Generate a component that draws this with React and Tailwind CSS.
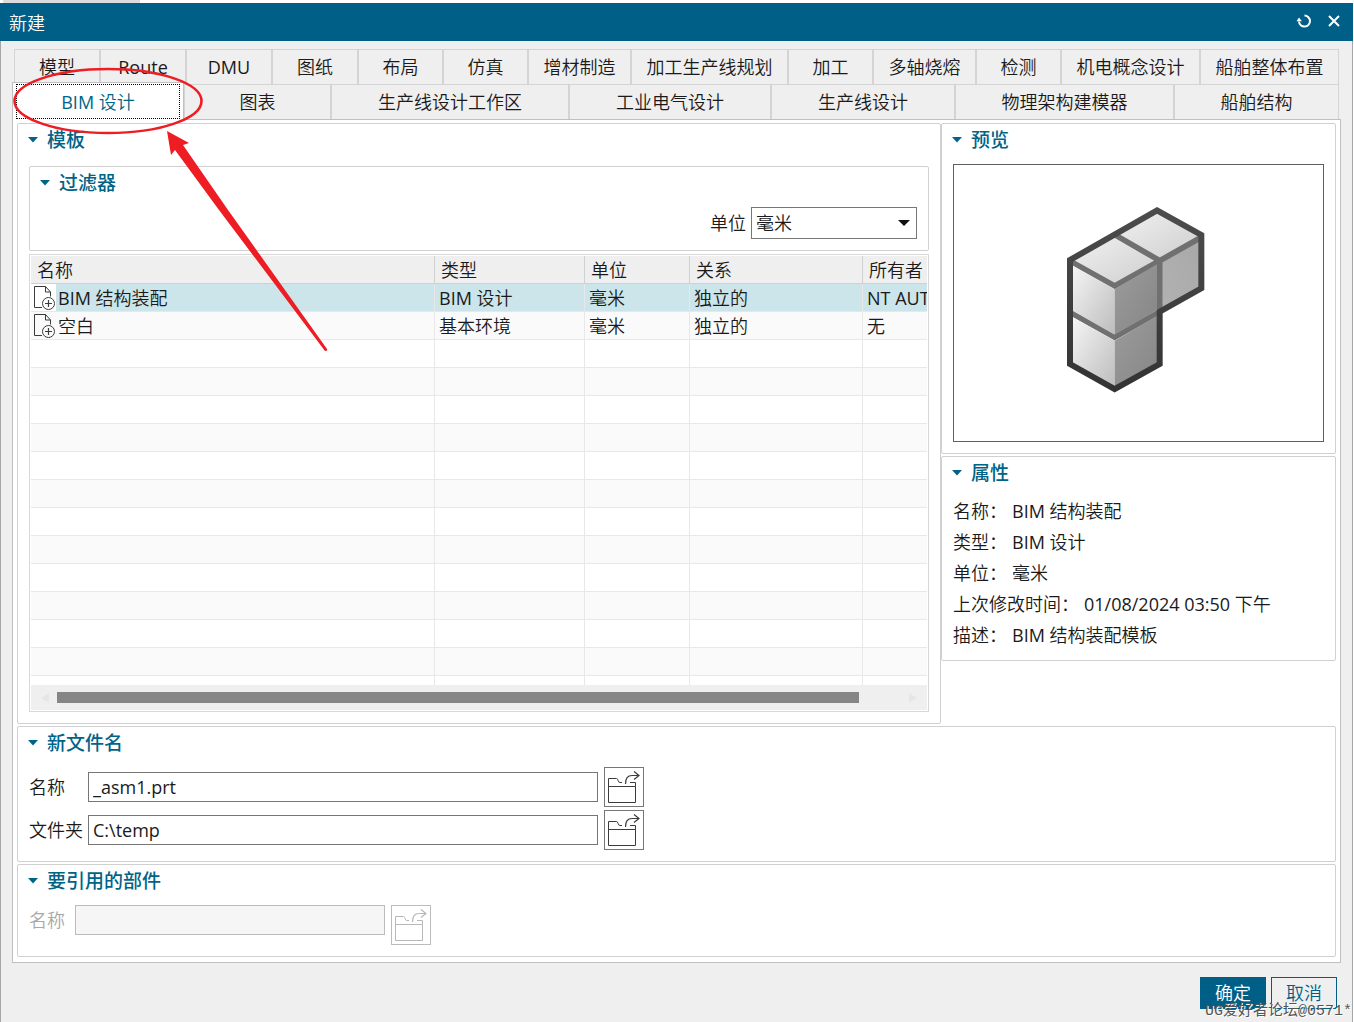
import React, { useState } from "react";

const tabsTop = [
  "模型",
  "Route",
  "DMU",
  "图纸",
  "布局",
  "仿真",
  "增材制造",
  "加工生产线规划",
  "加工",
  "多轴烧熔",
  "检测",
  "机电概念设计",
  "船舶整体布置",
];

const tabsBottom = [
  "BIM 设计",
  "图表",
  "生产线设计工作区",
  "工业电气设计",
  "生产线设计",
  "物理架构建模器",
  "船舶结构",
];

const templates = [
  { name: "BIM 结构装配", type: "BIM 设计", unit: "毫米", relation: "独立的", owner: "NT AUTHORITY" },
  { name: "空白", type: "基本环境", unit: "毫米", relation: "独立的", owner: "无" },
];

const properties = [
  ["名称：", "BIM 结构装配"],
  ["类型：", "BIM 设计"],
  ["单位：", "毫米"],
  ["上次修改时间：", "01/08/2024 03:50 下午"],
  ["描述：", "BIM 结构装配模板"],
];

const EMPTY_ROWS = 13;

const ResetIcon = () => (
  <svg width="16" height="16" viewBox="0 0 16 16" fill="none" stroke="white" strokeWidth="2">
    <path d="M8.5 2.6A5.5 5.5 0 1 1 3 8.5" />
    <path d="M0.5 8.2L3 4.5L6 8.2Z" fill="white" stroke="none" />
  </svg>
);

const CloseIcon = () => (
  <svg width="12" height="12" viewBox="0 0 12 12" fill="none" stroke="white" strokeWidth="2">
    <path d="M1 1L11 11M11 1L1 11" />
  </svg>
);

const FileIcon = () => (
  <svg width="22" height="25" viewBox="0 0 22 25" fill="none" stroke="#3c3c3c" strokeWidth="1">
    <path d="M8 22.5H0.5V1.5H11.5L16.5 7V11.5M11.5 1.5V7H16.5" />
    <circle cx="14.5" cy="18.5" r="6" />
    <path d="M11 18.5H18M14.5 15V22" strokeWidth="1.2" />
  </svg>
);

const FolderIcon = () => (
  <svg width="38" height="38" viewBox="1 1 38 38" fill="none" stroke="currentColor" strokeWidth="1">
    <path d="M4.5 19.5H31.5V35.5H4.5V11.5H12.5C14.5 11.5 13.5 15.5 16 15.5H18" />
    <path d="M26 15.5H31.5V19.5" />
    <path d="M21.5 17C21.5 11.5 23.5 8.5 28 8.5H35M30 4.5L35 8.5L30 12.5" strokeWidth="1.2" />
  </svg>
);

const CubeIcon = () => (
  <svg className="w-[200px] h-[220px]" viewBox="-4 9 600 660">
    <defs>
      <linearGradient id="top" x1="0" y1="0" x2="1" y2="1">
        <stop offset="0" stopColor="#f2f2f2" />
        <stop offset="1" stopColor="#cdcdcd" />
      </linearGradient>
      <linearGradient id="left" x1="0" y1="0" x2="1" y2="1">
        <stop offset="0" stopColor="#f8f8f8" />
        <stop offset="1" stopColor="#bcbcbc" />
      </linearGradient>
      <linearGradient id="right" x1="0" y1="0" x2="1" y2="1">
        <stop offset="0" stopColor="#9c9c9c" />
        <stop offset="1" stopColor="#858585" />
      </linearGradient>
      <linearGradient id="far" x1="1" y1="0" x2="0" y2="1">
        <stop offset="0" stopColor="#a8a8a8" />
        <stop offset="1" stopColor="#b2b2b2" />
      </linearGradient>
      <linearGradient id="edge" x1="0" y1="0" x2="0" y2="1">
        <stop offset="0" stopColor="#4c4c4c" />
        <stop offset="1" stopColor="#333333" />
      </linearGradient>
    </defs>
    <polygon points="89,212 228,137 358,212 223,288" fill="url(#top)" />
    <polygon points="228,137 350,61 483,137 358,212" fill="url(#top)" />
    <polygon points="358,212 483,137 483,295 358,365" fill="url(#far)" />
    <path
      d="M95 217L223 288L483 142M228 137L358 212V365L223 442L95 370"
      fill="none"
      stroke="#707070"
      strokeWidth="17"
    />
    <polygon points="89,222 223,297 223,434 89,358" fill="url(#left)" />
    <polygon points="89,378 223,452 223,597 89,522" fill="url(#left)" />
    <polygon points="223,297 350,223 350,360 223,434" fill="url(#right)" />
    <polygon points="223,452 350,378 358,522 223,597" fill="url(#right)" />
    <polygon
      points="350,61 483,135 483,295 358,365 358,522 223,597 89,522 89,210"
      fill="none"
      stroke="url(#edge)"
      strokeWidth="18"
    />
  </svg>
);

const Group = ({ title, className = "", children }) => (
  <section className={`border border-[#d0d0d0] rounded-xs ${className}`}>
    <h2 className="h-8">
      <button className="h-8 pl-2.5 flex items-center gap-[9px] text-[19px] leading-8 font-medium font-['Open_Sans','Noto_Sans_CJK_SC',sans-serif] text-[#006487]">
        <svg width="10" height="6" viewBox="0 0 10 6" fill="currentColor">
          <path d="M0 0H10L5 5.5Z" />
        </svg>
        {title}
      </button>
    </h2>
    {children}
  </section>
);

const Tab = ({ label, active, onClick }) =>
  active ? (
    <button
      role="tab"
      aria-selected="true"
      onClick={onClick}
      className="z-10 -mt-0.5 -mb-px bg-white border border-b-0 border-[#c0c0c0] pt-px px-[3px] pb-px text-[#006487]"
    >
      <span className="flex h-full items-center justify-center border border-dotted border-black">{label}</span>
    </button>
  ) : (
    <button
      role="tab"
      aria-selected="false"
      onClick={onClick}
      className="border border-b-0 border-[#d4d4d4] whitespace-nowrap"
    >
      {label}
    </button>
  );

const FileRow = ({ id, label, value, onChange }) => (
  <div className="flex items-center">
    <label htmlFor={id} className="w-[59px] whitespace-nowrap">{label}</label>
    <input
      id={id}
      value={value}
      onChange={(e) => onChange(e.target.value)}
      className="w-[510px] h-[30px] px-1 border border-[#767676] outline-none"
    />
    <button aria-label="浏览" className="ml-1.5 size-10 border border-[#767676] text-[#3c3c3c]">
      <FolderIcon />
    </button>
  </div>
);

const TemplateTable = ({ selected, setSelected }) => (
  <div className="mt-[3px] border border-[#d8d8d8] p-px">
    <div className="h-[429px] overflow-hidden">
      <table className="w-full table-fixed border-separate border-spacing-0 text-left whitespace-nowrap">
        <colgroup>
          <col />
          <col className="w-[150px]" />
          <col className="w-[105px]" />
          <col className="w-[173px]" />
          <col className="w-[64px]" />
        </colgroup>
        <thead>
          <tr className="h-7 bg-[#efefef]">
            {["名称", "类型", "单位", "关系", "所有者"].map((head) => (
              <th
                key={head}
                className="h-7 p-0 pl-1.5 font-normal leading-6 border-b border-r last:border-r-0 border-[#d0d0d0]"
              >
                {head}
              </th>
            ))}
          </tr>
        </thead>
        <tbody>
          {templates.map((row, index) => (
            <tr
              key={row.name}
              onClick={() => setSelected(index)}
              className={selected === index ? "bg-[#cce5ea]" : "bg-[#fafafa]"}
            >
              <td className="h-7 p-0 border-b border-r border-[#e8e8e8]">
                <div className="flex items-center leading-6">
                  <span className={`h-[27px] pt-px pl-[3px] ${selected === index ? "bg-white" : ""}`}>
                    <FileIcon />
                  </span>
                  <span className="pl-0.5">{row.name}</span>
                </div>
              </td>
              <td className="p-0 pl-1 leading-6 border-b border-r border-[#e8e8e8]">{row.type}</td>
              <td className="p-0 pl-1 leading-6 border-b border-r border-[#e8e8e8]">{row.unit}</td>
              <td className="p-0 pl-1 leading-6 border-b border-r border-[#e8e8e8]">{row.relation}</td>
              <td className="p-0 pl-1 leading-6 border-b border-[#e8e8e8] overflow-hidden">{row.owner}</td>
            </tr>
          ))}
          {Array.from({ length: EMPTY_ROWS }, (_, index) => (
            <tr key={index} className="even:bg-[#fafafa]">
              {[0, 1, 2, 3, 4].map((cell) => (
                <td key={cell} className="h-7 p-0 border-b border-r last:border-r-0 border-[#e8e8e8]" />
              ))}
            </tr>
          ))}
        </tbody>
      </table>
    </div>
    <div className="h-[25px] bg-[#efefef] flex items-center px-2.5">
      <svg width="8" height="10" viewBox="0 0 8 10" fill="#e6e6e6">
        <path d="M8 0V10L0 5Z" />
      </svg>
      <div className="flex-1 px-2">
        <div className="h-[11px] w-[95%] bg-[#868686]" />
      </div>
      <svg width="8" height="10" viewBox="0 0 8 10" fill="#e6e6e6">
        <path d="M0 0V10L8 5Z" />
      </svg>
    </div>
  </div>
);

const Annotation = () => (
  <svg
    className="absolute left-0 top-0 z-20 pointer-events-none"
    width="340"
    height="360"
    viewBox="0 0 340 360"
    fill="none"
  >
    <ellipse cx="108" cy="101" rx="93.5" ry="32" stroke="#ee1c23" strokeWidth="2.6" />
    <path
      d="M167 131L189 143L183 145L228 210L327 349Q328 351 325 351L219 210L175 150L171 155Z"
      fill="#ee1c23"
    />
  </svg>
);

const App = () => {
  const [activeTab, setActiveTab] = useState("BIM 设计");
  const [selected, setSelected] = useState(0);
  const [unit, setUnit] = useState("毫米");
  const [fileName, setFileName] = useState("_asm1.prt");
  const [folder, setFolder] = useState("C:\\temp");

  return (
    <div className="relative min-h-screen flex flex-col pr-px bg-white text-[18px] leading-6 text-[#1a1a1a] font-['Open_Sans','Noto_Sans_CJK_SC_DemiLight','Noto_Sans_CJK_SC',sans-serif]">
      <div className="h-[3px] pl-[3px]">
        <div className="h-[3px] w-[137px] bg-[#dcdcdc]" />
      </div>
      <header className="h-[38px] flex items-center justify-between bg-[#005f87] text-white pl-[9px] pr-[13px]">
        <h1 className="pt-0.5">新建</h1>
        <div className="flex items-center gap-4 pb-[3px]">
          <button aria-label="重置"><ResetIcon /></button>
          <button aria-label="关闭"><CloseIcon /></button>
        </div>
      </header>

      <div className="flex-1 border-x border-[#a6a6a6] bg-[#efefef] px-[11px] pt-2">
        <div role="tablist">
          <div className="mx-0.5 h-[35px] grid grid-cols-[86fr_86fr_86fr_86fr_85fr_85fr_103fr_157fr_85fr_103fr_85fr_139fr_139fr]">
            {tabsTop.map((tab) => (
              <Tab key={tab} label={tab} active={activeTab === tab} onClick={() => setActiveTab(tab)} />
            ))}
          </div>
          <div className="mr-0.5 h-[35px] grid grid-cols-[172fr_147fr_238fr_202fr_184fr_219fr_165fr]">
            {tabsBottom.map((tab) => (
              <Tab key={tab} label={tab} active={activeTab === tab} onClick={() => setActiveTab(tab)} />
            ))}
          </div>
        </div>

        <main className="bg-white border border-[#c0c0c0] px-1 pt-[3px] pb-[5px] flex flex-col gap-0.5">
          <div className="flex">
            <Group title="模板" className="flex-1 min-w-0">
              <div className="px-[11px] pt-2.5 pb-[11px]">
                <Group title="过滤器">
                  <div className="flex justify-end items-center gap-[5px] pt-2 pr-[11px] pb-[11px]">
                    <label htmlFor="unit">单位</label>
                    <div className="relative">
                      <select
                        id="unit"
                        value={unit}
                        onChange={(e) => setUnit(e.target.value)}
                        className="block appearance-none w-[166px] h-8 px-1 border border-[#767676] bg-white outline-none"
                      >
                        <option>毫米</option>
                        <option>英寸</option>
                      </select>
                      <svg
                        className="absolute right-[7px] top-[13px] pointer-events-none"
                        width="12"
                        height="6"
                        viewBox="0 0 12 6"
                      >
                        <path d="M0 0H12L6 6Z" fill="#111" />
                      </svg>
                    </div>
                  </div>
                </Group>
                <TemplateTable selected={selected} setSelected={setSelected} />
              </div>
            </Group>

            <div className="w-[395px] flex flex-col gap-0.5">
              <Group title="预览">
                <div className="mx-[11px] mt-2 mb-[11px] h-[278px] border border-[#606060] flex items-center justify-center">
                  <CubeIcon />
                </div>
              </Group>
              <Group title="属性">
                <dl className="px-[11px] pt-[7px] pb-[9px] leading-[31px]">
                  {properties.map(([term, value]) => (
                    <div key={term} className="flex gap-[5px]">
                      <dt>{term}</dt>
                      <dd>{value}</dd>
                    </div>
                  ))}
                </dl>
              </Group>
            </div>
          </div>

          <Group title="新文件名">
            <div className="px-[11px] pt-2 pb-[11px] flex flex-col gap-[3px]">
              <FileRow id="file-name" label="名称" value={fileName} onChange={setFileName} />
              <FileRow id="folder" label="文件夹" value={folder} onChange={setFolder} />
            </div>
          </Group>

          <Group title="要引用的部件">
            <div className="px-[11px] pt-2 pb-[11px] flex items-start">
              <label htmlFor="ref-name" className="w-[46px] leading-[30px] text-[#a8a8a8]">名称</label>
              <input
                id="ref-name"
                disabled
                className="w-[310px] h-[30px] px-1 border border-[#bcbcbc] bg-[#f6f6f6]"
              />
              <button
                aria-label="浏览"
                disabled
                className="ml-1.5 size-10 border border-[#bcbcbc] text-[#b8b8b8]"
              >
                <FolderIcon />
              </button>
            </div>
          </Group>
        </main>

        <footer className="flex justify-end gap-[5px] pt-3.5 pr-1 pb-[13px]">
          <button className="w-[66px] h-8 bg-[#005f87] text-white">确定</button>
          <button className="w-[66px] h-8 border border-[#005f87] text-[#005f87]">取消</button>
        </footer>
      </div>

      <Annotation />
      <p className="absolute right-0.5 bottom-0 z-20 text-[15px] leading-5 text-[#555] [text-shadow:1px_1px_0_#fff] font-['Liberation_Mono','Noto_Sans_CJK_SC',monospace]">
        UG爱好者论坛@0571*
      </p>
    </div>
  );
};

export default App;
